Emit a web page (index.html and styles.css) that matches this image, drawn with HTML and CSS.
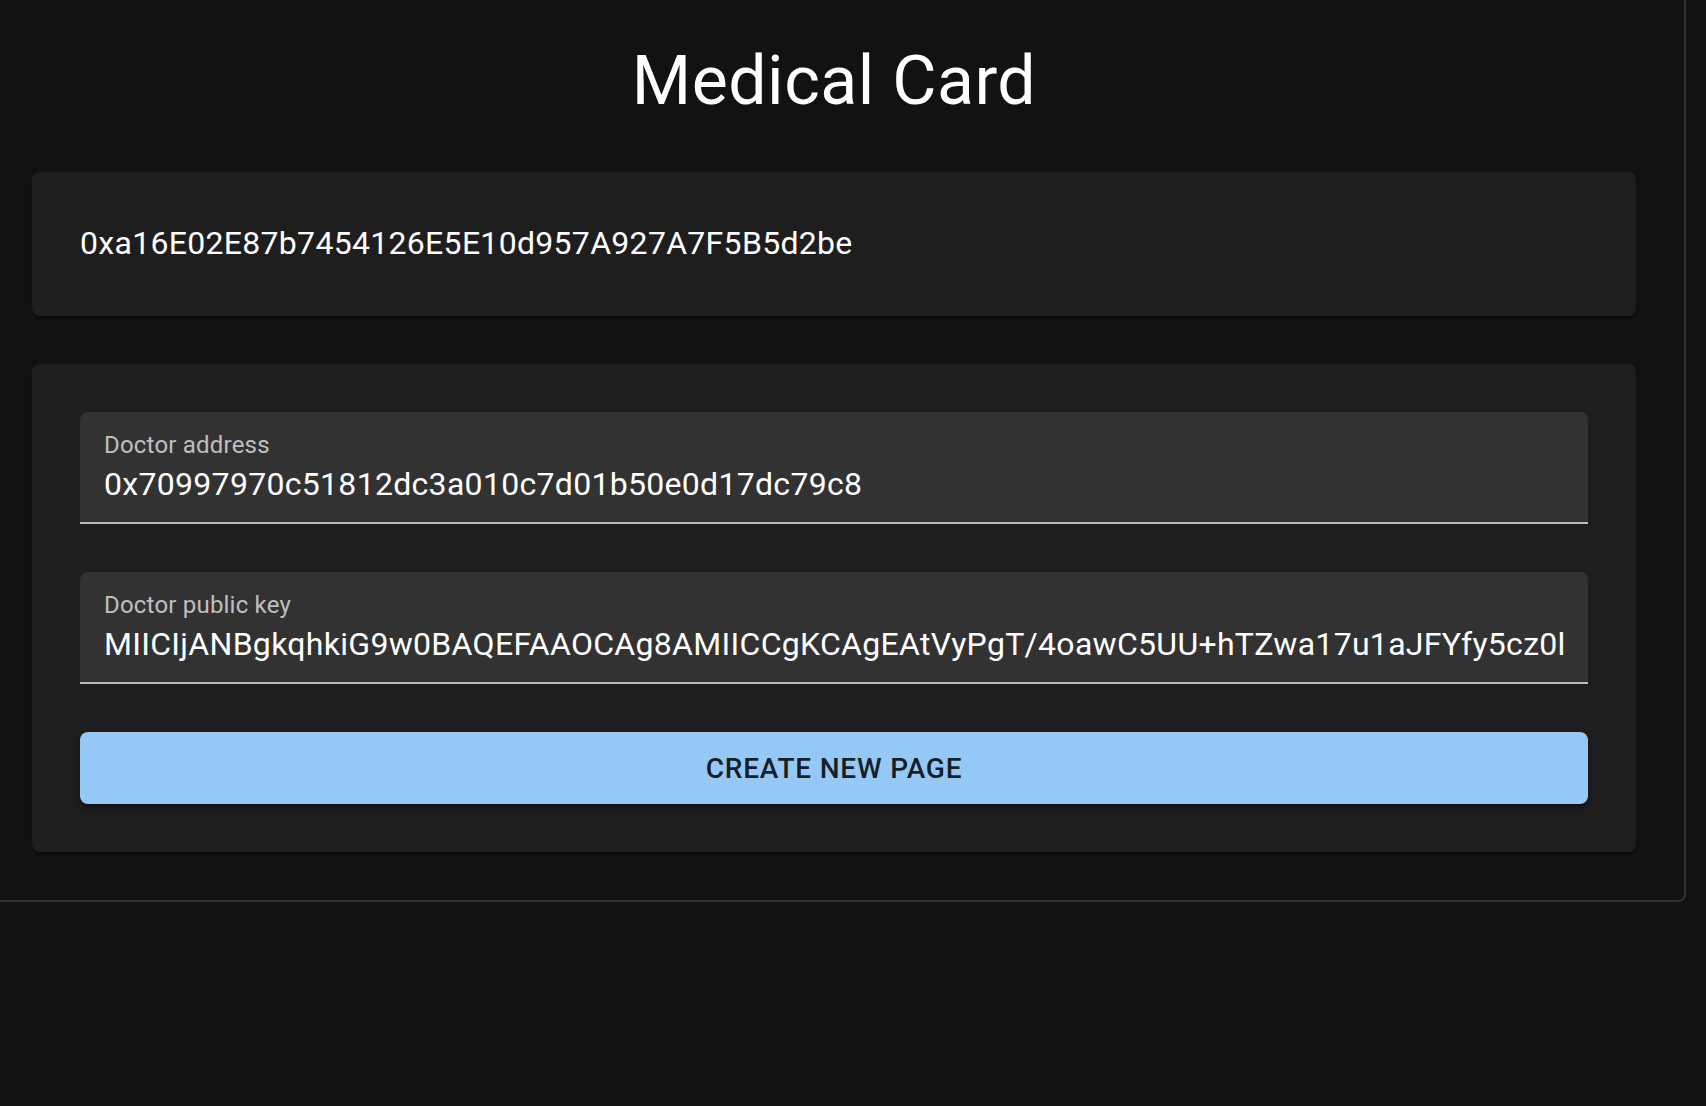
FILE: index.html
```html
<!DOCTYPE html>
<html lang="en">
<head>
<meta charset="utf-8">
<title>Medical Card</title>
<link rel="stylesheet" href="styles.css">
</head>
<body>
<main class="frame">
  <h1 class="title">Medical Card</h1>
  <section class="card card-address">
    <p class="address">0xa16E02E87b7454126E5E10d957A927A7F5B5d2be</p>
  </section>
  <section class="card card-form">
    <div class="field">
      <label class="field-label" for="doc-addr">Doctor address</label>
      <input class="field-input" id="doc-addr" type="text" value="0x70997970c51812dc3a010c7d01b50e0d17dc79c8">
    </div>
    <div class="field">
      <label class="field-label" for="doc-key">Doctor public key</label>
      <input class="field-input" id="doc-key" type="text" value="MIICIjANBgkqhkiG9w0BAQEFAAOCAg8AMIICCgKCAgEAtVyPgT/4oawC5UU+hTZwa17u1aJFYfy5cz0lQm3sXbK">
    </div>
    <button class="btn" type="button">Create new page</button>
  </section>
</main>
</body>
</html>
```

FILE: styles.css
```css
* { box-sizing: border-box; }

html, body {
  margin: 0;
  padding: 0;
  background: #121212;
  color: #fff;
  font-family: Roboto, "Noto Sans", "Liberation Sans", sans-serif;
  overflow: hidden;
}

.frame {
  margin-left: -16px;
  width: 1702px;
  padding: 39px 48px 48px 48px;
  border-right: 2px solid #303030;
  border-bottom: 2px solid #303030;
  border-bottom-right-radius: 8px;
  display: flex;
  flex-direction: column;
  gap: 48px;
}

.title {
  margin: 0 0 1px 0;
  font-size: 68px;
  font-weight: 400;
  line-height: 84px;
  letter-spacing: 0.5px;
  text-align: center;
}

.card {
  background: #1e1e1e;
  border-radius: 8px;
  padding: 48px;
  box-shadow: 0 4px 2px -2px rgba(0,0,0,0.2), 0 2px 2px 0 rgba(0,0,0,0.14), 0 2px 6px 0 rgba(0,0,0,0.12);
}

.address {
  margin: -1px 0 1px 0;
  font-size: 32px;
  line-height: 48px;
  letter-spacing: 0.3px;
}

.card-form {
  display: flex;
  flex-direction: column;
  gap: 48px;
}

.field {
  position: relative;
  height: 112px;
  background: #323232;
  border-radius: 8px 8px 0 0;
  border-bottom: 2px solid #bdbdbd;
}

.field-label {
  position: absolute;
  left: 24px;
  top: 16px;
  font-size: 24px;
  line-height: 34px;
  color: rgba(255,255,255,0.7);
  letter-spacing: 0.2px;
}

.field-input {
  display: block;
  width: 100%;
  height: 110px;
  margin: 0;
  padding: 49px 24px 15px 24px;
  border: 0;
  outline: none;
  background: transparent;
  color: #fff;
  font-family: inherit;
  font-size: 32px;
  line-height: 46px;
  letter-spacing: 0.3px;
}

.btn {
  height: 72px;
  padding-top: 2px;
  border: 0;
  border-radius: 8px;
  background: #95c8f5;
  color: rgba(0,0,0,0.87);
  font-family: inherit;
  font-size: 28px;
  font-weight: 500;
  letter-spacing: 0.8px;
  text-transform: uppercase;
  box-shadow: 0 6px 2px -4px rgba(0,0,0,0.2), 0 4px 4px 0 rgba(0,0,0,0.14), 0 2px 10px 0 rgba(0,0,0,0.12);
  cursor: pointer;
}
```
